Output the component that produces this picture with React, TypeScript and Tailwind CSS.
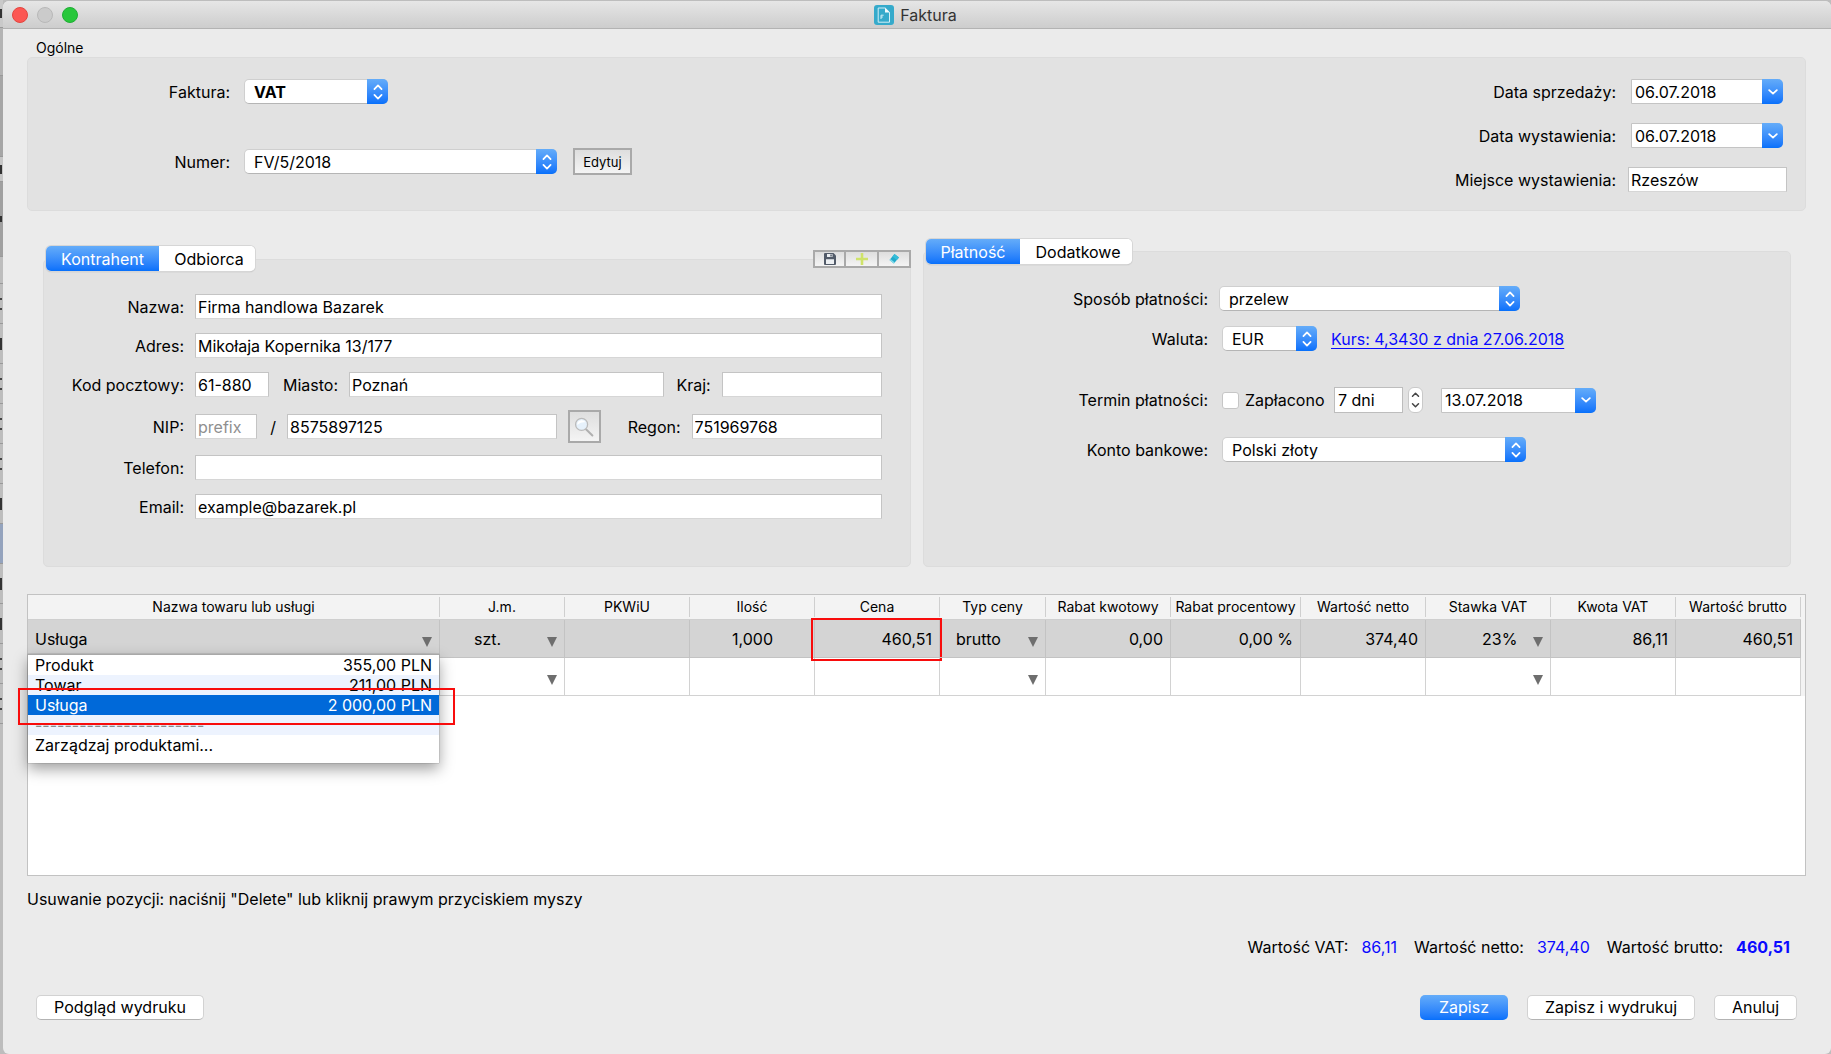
import React from "react";

const FIELD =
  "block h-[25px] min-w-0 border border-[#c4c4c4] border-b-[#d6d6d6] bg-white px-[2px] text-base leading-[22px] text-black outline-none placeholder:text-[#8f8f8f]";

function Cap({ kind }: { kind: "updown" | "down" }) {
  return (
    <span className="pointer-events-none absolute inset-y-0 right-0 flex w-[21px] items-center justify-center rounded-r-[5px] bg-gradient-to-b from-[#64acf9] to-[#0670fb]">
      {kind === "updown" ? (
        <svg width="10" height="16" viewBox="0 0 10 16" fill="none" stroke="#fff" strokeWidth="1.7" strokeLinecap="round" strokeLinejoin="round">
          <path d="M1.4 5.2 5 1.3l3.6 3.9M1.4 10.8 5 14.7l3.6-3.9" />
        </svg>
      ) : (
        <svg width="10" height="6" viewBox="0 0 10 6" fill="none" stroke="#fff" strokeWidth="1.8" strokeLinecap="round" strokeLinejoin="round">
          <path d="M1.2 1.2 5 4.6l3.8-3.4" />
        </svg>
      )}
    </span>
  );
}

function Select({ id, value, width, bold }: { id: string; value: string; width: string; bold?: boolean }) {
  return (
    <span className={`relative block h-[25px] ${width}`}>
      <select
        id={id}
        defaultValue={value}
        className={`block h-[25px] w-full appearance-none rounded-[5px] border border-[#cfcfcf] border-b-[#b5b5b5] bg-white pl-[9px] pr-6 text-base leading-[22px] text-black outline-none ${bold ? "font-bold" : ""}`}
      >
        <option>{value}</option>
      </select>
      <Cap kind="updown" />
    </span>
  );
}

function DateBox({ id, value, width, label }: { id: string; value: string; width: string; label?: string }) {
  return (
    <span className={`relative block h-[25px] ${width}`}>
      <input
        id={id}
        aria-label={label}
        defaultValue={value}
        className="block h-[25px] w-full rounded-r-[5px] border border-[#c4c4c4] bg-white pl-[3px] pr-6 text-base leading-[22px] text-black outline-none"
      />
      <Cap kind="down" />
    </span>
  );
}

function Label({ htmlFor, width, children }: { htmlFor: string; width?: string; children: React.ReactNode }) {
  return (
    <label htmlFor={htmlFor} className={`shrink-0 whitespace-nowrap text-right ${width ?? ""}`}>
      {children}
    </label>
  );
}

function Tabs({ first, second, w1, w2 }: { first: string; second: string; w1: string; w2: string }) {
  return (
    <div role="tablist" className="flex h-[25px] w-fit overflow-hidden rounded-[5px] bg-white shadow-[0_0_0_1px_#d6d6d6,0_1px_1px_#9c9c9c]">
      <button role="tab" aria-selected="true" className={`bg-gradient-to-b from-[#64acf9] to-[#0670fb] text-white ${w1}`}>
        {first}
      </button>
      <button role="tab" aria-selected="false" className={`bg-white pl-1 ${w2}`}>
        {second}
      </button>
    </div>
  );
}

function Triangle() {
  return (
    <svg width="10" height="10" viewBox="0 0 10 10" className="mt-[6px] shrink-0" aria-hidden="true">
      <path d="M0 0h10L5 10z" fill="#6e6e6e" />
    </svg>
  );
}

const COLUMNS: { title: string; width: string }[] = [
  { title: "Nazwa towaru lub usługi", width: "" },
  { title: "J.m.", width: "w-[125px]" },
  { title: "PKWiU", width: "w-[125px]" },
  { title: "Ilość", width: "w-[125px]" },
  { title: "Cena", width: "w-[125px]" },
  { title: "Typ ceny", width: "w-[106px]" },
  { title: "Rabat kwotowy", width: "w-[125px]" },
  { title: "Rabat procentowy", width: "w-[130px]" },
  { title: "Wartość netto", width: "w-[125px]" },
  { title: "Stawka VAT", width: "w-[125px]" },
  { title: "Kwota VAT", width: "w-[125px]" },
  { title: "Wartość brutto", width: "w-[125px]" },
];

const PRODUCTS = [
  { name: "Produkt", price: "355,00 PLN", style: "bg-white" },
  { name: "Towar", price: "211,00 PLN", style: "bg-[#edf3fe]" },
  { name: "Usługa", price: "2 000,00 PLN", style: "bg-[#0069d9] text-white" },
  { name: "-----------------------", price: "", style: "bg-[#edf3fe] text-[#8a8a8a]" },
  { name: "Zarządzaj produktami...", price: "", style: "bg-white" },
];

function ProductMenu() {
  return (
    <div className="absolute inset-x-0 top-[34px] z-10 border-t border-[#a8a8a8] bg-white pb-2 shadow-[0_6px_14px_rgba(0,0,0,0.38),0_0_1px_rgba(0,0,0,0.5)]">
      <ul role="listbox" aria-label="Produkty">
        {PRODUCTS.map((p) => (
          <li
            key={p.name}
            role="option"
            aria-selected={p.name === "Usługa"}
            className={`flex h-5 items-center justify-between px-[7px] leading-5 ${p.style}`}
          >
            <span>{p.name}</span>
            <span>{p.price}</span>
          </li>
        ))}
      </ul>
      <div className="pointer-events-none absolute -left-[10px] -right-[16px] top-[33px] h-[37px] border-2 border-[#f80c0c]" />
    </div>
  );
}

const CELL = "relative h-[38px] border-r border-b border-[#c3c3c3] p-0";
const EMPTY = "h-[38px] border-r border-b border-[#d2d2d2] p-0";

function Items() {
  return (
    <div className="flex-1 border border-[#c2c2c2] bg-white">
      <div className="bg-[#f3f3f3]">
        <div className="pr-1">
          <table className="w-full table-fixed border-separate border-spacing-0">
            <colgroup>
              {COLUMNS.map((c) => (
                <col key={c.title} className={c.width} />
              ))}
            </colgroup>
            <thead>
              <tr>
                {COLUMNS.map((c) => (
                  <th key={c.title} className="h-[25px] border-b border-[#cfcfcf] bg-[#f3f3f3] p-0 text-sm font-normal">
                    <div className="flex h-5 items-center justify-center whitespace-nowrap border-r border-[#cfcfcf]">{c.title}</div>
                  </th>
                ))}
              </tr>
            </thead>
            <tbody>
              <tr className="bg-[#d4d4d4]">
                <td className={CELL}>
                  <button aria-haspopup="listbox" aria-expanded="true" className="flex w-full items-center justify-between px-[7px] text-left">
                    Usługa
                    <Triangle />
                  </button>
                  <ProductMenu />
                </td>
                <td className={CELL}>
                  <button className="flex w-full items-center justify-between pl-[34px] pr-[7px]">
                    szt.
                    <Triangle />
                  </button>
                </td>
                <td className={CELL} />
                <td className={`${CELL} pr-[41px] text-right`}>1,000</td>
                <td className={`${CELL} pr-[7px] text-right`}>
                  460,51
                  <div className="pointer-events-none absolute -left-1 -right-[3px] -top-[2px] h-[43px] border-2 border-[#f80c0c]" />
                </td>
                <td className={CELL}>
                  <button className="flex w-full items-center justify-between pl-[16px] pr-[7px]">
                    brutto
                    <Triangle />
                  </button>
                </td>
                <td className={`${CELL} pr-[7px] text-right`}>0,00</td>
                <td className={`${CELL} pr-[7px] text-right`}>0,00 %</td>
                <td className={`${CELL} pr-[7px] text-right`}>374,40</td>
                <td className={CELL}>
                  <button className="flex w-full items-center justify-between pl-[56px] pr-[7px]">
                    23%
                    <Triangle />
                  </button>
                </td>
                <td className={`${CELL} pr-[7px] text-right`}>86,11</td>
                <td className={`${CELL} pr-[7px] text-right`}>460,51</td>
              </tr>
              <tr className="bg-white">
                {COLUMNS.map((c) => (
                  <td key={c.title} className={EMPTY}>
                    {["J.m.", "Typ ceny", "Stawka VAT"].includes(c.title) && (
                      <button aria-label={c.title} className="flex w-full justify-end pr-[7px]">
                        <Triangle />
                      </button>
                    )}
                  </td>
                ))}
              </tr>
            </tbody>
          </table>
        </div>
      </div>
    </div>
  );
}

const PUSH =
  "h-[25px] rounded-[5px] border border-[#d2d2d2] border-b-[#b3b3b3] bg-white leading-[23px] whitespace-nowrap";
const BEVEL = "flex items-center justify-center border-2 border-[#a9a9a9] bg-gradient-to-b from-[#dedede] to-[#f4f4f4]";

// Sliver of the window that lies behind this one: row height and tone, and the mark at its edge.
const BACKDROP = [
  { row: "h-[28px] bg-[#c9c9c9]", mark: "h-[9px]" },
  { row: "h-[48px] bg-[#b4b4b4]", mark: "" },
  { row: "h-[81px] bg-[#a6a6a6]", mark: "" },
  { row: "h-[25px] bg-[#c6c6c6]", mark: "h-[9px]" },
  { row: "h-[75px] bg-[#a0a0a0]", mark: "h-[6px]" },
  { row: "h-[27px] bg-[#bdbdbd]", mark: "" },
  { row: "h-[40px] bg-[#bdbdbd]", mark: "h-[12px] border-y-2 border-[#444] bg-transparent" },
  { row: "h-[40px] bg-[#bdbdbd]", mark: "h-[12px]" },
  { row: "h-[40px] bg-[#bdbdbd]", mark: "h-[12px] border-y-2 border-[#444] bg-transparent" },
  { row: "h-[40px] bg-[#bdbdbd]", mark: "h-[12px] border-y-2 border-[#444] bg-transparent" },
  { row: "h-[40px] bg-[#bdbdbd]", mark: "h-[12px] border-y-2 border-[#444] bg-transparent" },
  { row: "h-[40px] bg-[#bdbdbd]", mark: "h-[12px]" },
  { row: "h-[40px] bg-[#94a3bd]", mark: "" },
  { row: "h-[40px] bg-[#bdbdbd]", mark: "h-[12px]" },
  { row: "h-[40px] bg-[#bdbdbd]", mark: "h-[12px]" },
  { row: "h-[40px] bg-[#bdbdbd]", mark: "h-[12px] border-y-2 border-[#444] bg-transparent" },
  { row: "h-[40px] bg-[#bdbdbd]", mark: "h-[12px] border-y-2 border-[#444] bg-transparent" },
];

export default function App() {
  return (
    <div className="flex min-h-screen bg-[#bdbdbd] font-['Inter',sans-serif] text-base leading-5 text-black">
      <div aria-hidden="true" className="w-[3px] shrink-0 overflow-hidden">
        {BACKDROP.map((b, i) => (
          <div key={i} className={`flex items-center border-b border-[#999] ${b.row}`}>
            {b.mark && <span className={`w-[2px] ${b.mark.includes("transparent") ? "" : "bg-[#333]"} ${b.mark}`} />}
          </div>
        ))}
      </div>

      <main className="mt-px flex min-w-0 flex-1 flex-col overflow-hidden rounded-[6px] bg-[#ebebeb]">
        <header className="relative flex h-[28px] shrink-0 items-center justify-center border-b border-[#b3b3b3] bg-gradient-to-b from-[#e6e6e6] to-[#cdcdcd]">
          <div className="absolute left-[9px] top-[6px] flex gap-[9px]">
            <button aria-label="Zamknij" className="size-4 rounded-full border border-[#e2463f] bg-[#fc5753]" />
            <button aria-label="Minimalizuj" className="size-4 rounded-full border border-[#b8b8b8] bg-[#cbcbcb]" />
            <button aria-label="Powiększ" className="size-4 rounded-full border border-[#1fae35] bg-[#28c73b]" />
          </div>
          <h1 className="flex items-center gap-[6px] pr-[3px] text-[#333]">
            <svg width="20" height="20" viewBox="0 0 20 20" aria-hidden="true">
              <rect width="20" height="20" rx="3" fill="#35aacb" />
              <path d="M4.2 3h7l4.3 4.3v9.9H4.2z" fill="#35aacb" stroke="#d3eff7" strokeWidth="1" />
              <path d="M11 2.7v4.8h4.8z" fill="#f3fbfd" />
              <path d="M7 14V10.200h2.600M7 12h1.800" fill="none" stroke="#d3eff7" strokeWidth="1" />
            </svg>
            Faktura
          </h1>
        </header>

        <div className="flex flex-1 flex-col pb-[34px] pl-[24px] pr-[25px] pt-[10px]">
          <h2 className="pl-[9px] text-sm leading-[18px]">Ogólne</h2>
          <section className="flex h-[154px] shrink-0 justify-between rounded-[5px] border border-[#dcdcdc] bg-[#e2e2e2] pr-[18px] pt-[21px]">
            <div className="flex flex-col gap-[45px]">
              <div className="flex h-[25px] items-center gap-[14px]">
                <Label htmlFor="typ" width="w-[202px]">Faktura:</Label>
                <Select id="typ" value="VAT" width="w-[144px]" bold />
              </div>
              <div className="flex h-[25px] items-center gap-[14px]">
                <Label htmlFor="numer" width="w-[202px]">Numer:</Label>
                <Select id="numer" value="FV/5/2018" width="w-[313px]" />
                <button className={`${BEVEL} ml-[2px] h-[27px] w-[59px] text-[13px]`}>Edytuj</button>
              </div>
            </div>
            <div className="grid grid-cols-[auto_159px] content-start items-center gap-x-[12px] gap-y-[19px]">
              <Label htmlFor="sprzedaz">Data sprzedaży:</Label>
              <DateBox id="sprzedaz" value="06.07.2018" width="ml-[3px] w-[152px]" />
              <Label htmlFor="wystawienie">Data wystawienia:</Label>
              <DateBox id="wystawienie" value="06.07.2018" width="ml-[3px] w-[152px]" />
              <Label htmlFor="miejsce">Miejsce wystawienia:</Label>
              <input id="miejsce" defaultValue="Rzeszów" className={`${FIELD} w-full`} />
            </div>
          </section>

          <div className="flex shrink-0 gap-[12px] pl-[16px] pr-[15px] pt-[27px]">
            <section className="relative mt-[21px] h-[308px] min-w-0 flex-1 rounded-[5px] border border-[#dcdcdc] bg-[#e2e2e2]">
              <div className="absolute -top-[14px] left-[2px]">
                <Tabs first="Kontrahent" second="Odbiorca" w1="w-[113px]" w2="w-[96px]" />
              </div>
              <div className="absolute -right-px -top-[10px] flex">
                <button aria-label="Zapisz kontrahenta" className={`${BEVEL} h-[18px] w-[33px]`}>
                  <svg width="12" height="12" viewBox="0 0 12 12">
                    <path d="M0 1a1 1 0 0 1 1-1h8.5L12 2.5V11a1 1 0 0 1-1 1H1a1 1 0 0 1-1-1z" fill="#525b69" />
                    <path d="M3 1h5.5v3H3zM2 6.3h8V11H2z" fill="#eceff2" />
                    <path d="M6.3 1.4h1.5v2.2H6.3z" fill="#525b69" />
                  </svg>
                </button>
                <button aria-label="Dodaj kontrahenta" className={`${BEVEL} h-[18px] w-[33px] border-l-0`}>
                  <svg width="12" height="12" viewBox="0 0 12 12">
                    <path d="M4.700 0h2.600v4.700H12v2.600H7.300V12H4.700V7.300H0V4.700h4.700z" fill="#cfe36a" />
                  </svg>
                </button>
                <button aria-label="Wyczyść" className={`${BEVEL} h-[18px] w-[32px] border-l-0`}>
                  <svg width="12" height="12" viewBox="0 0 12 12">
                    <path d="M6.500 1 11 4.600 5.800 10.500 1.500 7z" fill="#21aacb" />
                    <path d="M6.500 1 11 4.600 8.800 7 4.400 3.400z" fill="#35bcd8" />
                    <path d="m1.500 7 4.300 3.500 1-1.100-4.400-3.500z" fill="#86dceb" />
                  </svg>
                </button>
              </div>

              <div className="flex flex-col pr-[28px] pt-[34px]">
                <div className="flex flex-col gap-[14px]">
                  <div className="flex items-center gap-[11px]">
                    <Label htmlFor="nazwa" width="w-[140px]">Nazwa:</Label>
                    <input id="nazwa" defaultValue="Firma handlowa Bazarek" className={`${FIELD} flex-1`} />
                  </div>
                  <div className="flex items-center gap-[11px]">
                    <Label htmlFor="adres" width="w-[140px]">Adres:</Label>
                    <input id="adres" defaultValue="Mikołaja Kopernika 13/177" className={`${FIELD} flex-1`} />
                  </div>
                  <div className="flex items-center gap-[11px]">
                    <Label htmlFor="kod" width="w-[140px]">Kod pocztowy:</Label>
                    <input id="kod" defaultValue="61-880" className={`${FIELD} w-[74px]`} />
                    <Label htmlFor="miasto" width="w-[58px]">Miasto:</Label>
                    <input id="miasto" defaultValue="Poznań" className={`${FIELD} flex-[2]`} />
                    <Label htmlFor="kraj" width="w-[36px]">Kraj:</Label>
                    <input id="kraj" className={`${FIELD} flex-1`} />
                  </div>
                </div>
                <div className="flex items-center gap-[11px] pt-[13px]">
                  <Label htmlFor="prefix" width="w-[140px]">NIP:</Label>
                  <input id="prefix" placeholder="prefix" className={`${FIELD} w-[62px]`} />
                  <span className="w-[8px] text-right">/</span>
                  <input id="nip" aria-label="NIP" defaultValue="8575897125" className={`${FIELD} flex-[10]`} />
                  <button aria-label="Szukaj" className={`${BEVEL} size-[33px] shrink-0`}>
                    <svg width="20" height="20" viewBox="0 0 20 20">
                      <path d="m12 12.3 6.4 6.2" stroke="#b0b0b0" strokeWidth="2" strokeLinecap="round" />
                      <circle cx="7.6" cy="7.4" r="6" fill="#e6f1fb" stroke="#bababa" strokeWidth="1.3" />
                      <path d="M3.4 6a4.6 4.6 0 0 1 8.2-.6C9 5 6 5.6 3.4 8z" fill="#fff" />
                    </svg>
                  </button>
                  <Label htmlFor="regon" width="w-[69px]">Regon:</Label>
                  <input id="regon" defaultValue="751969768" className={`${FIELD} flex-[7]`} />
                </div>
                <div className="flex flex-col gap-[14px] pt-[12px]">
                  <div className="flex items-center gap-[11px]">
                    <Label htmlFor="telefon" width="w-[140px]">Telefon:</Label>
                    <input id="telefon" className={`${FIELD} flex-1`} />
                  </div>
                  <div className="flex items-center gap-[11px]">
                    <Label htmlFor="email" width="w-[140px]">Email:</Label>
                    <input id="email" defaultValue="example@bazarek.pl" className={`${FIELD} flex-1`} />
                  </div>
                </div>
              </div>
            </section>

            <section className="relative mt-[13px] h-[316px] min-w-0 flex-1 rounded-[5px] border border-[#dcdcdc] bg-[#e2e2e2]">
              <div className="absolute -top-[13px] left-[2px]">
                <Tabs first="Płatność" second="Dodatkowe" w1="w-[94px]" w2="w-[112px]" />
              </div>
              <div className="flex flex-col pt-[34px]">
                <div className="flex items-center gap-[11px]">
                  <Label htmlFor="sposob" width="w-[284px]">Sposób płatności:</Label>
                  <Select id="sposob" value="przelew" width="w-[301px]" />
                </div>
                <div className="flex items-center gap-[14px] pt-[15px]">
                  <Label htmlFor="waluta" width="w-[284px]">Waluta:</Label>
                  <Select id="waluta" value="EUR" width="w-[95px]" />
                  <a href="#kurs" className="whitespace-nowrap text-[#0a0aff] underline underline-offset-[3px] decoration-1">
                    Kurs: 4,3430 z dnia 27.06.2018
                  </a>
                </div>
                <div className="flex items-center pt-[36px]">
                  <Label htmlFor="termin" width="w-[284px]">Termin płatności:</Label>
                  <label className="ml-[14px] flex w-[112px] items-center gap-[6px] whitespace-nowrap">
                    <input type="checkbox" className="size-[17px] shrink-0 appearance-none rounded-[3px] border border-[#c6c6c6] bg-white" />
                    Zapłacono
                  </label>
                  <input id="termin" defaultValue="7 dni" className="h-[26px] w-[69px] border border-[#bdbdbd] bg-white pl-[3px] outline-none" />
                  <button aria-label="Zmień liczbę dni" className="ml-[5px] flex h-[26px] w-[15px] items-center justify-center rounded-[6px] border border-[#c9c9c9] bg-white">
                    <svg width="9" height="16" viewBox="0 0 9 16" fill="none" stroke="#444" strokeWidth="1.5" strokeLinecap="round" strokeLinejoin="round">
                      <path d="M1.5 4.3 4.5 1.3l3 3M1.5 11.7l3 3 3-3" />
                    </svg>
                  </button>
                  <DateBox id="data-terminu" label="Data terminu" value="13.07.2018" width="ml-[18px] w-[155px]" />
                </div>
                <div className="flex items-center gap-[14px] pt-[24px]">
                  <Label htmlFor="konto" width="w-[284px]">Konto bankowe:</Label>
                  <Select id="konto" value="Polski złoty" width="w-[304px]" />
                </div>
              </div>
            </section>
          </div>

          <div className="flex flex-1 flex-col pt-[27px]">
            <Items />
          </div>

          <p className="pt-[13px]">Usuwanie pozycji: naciśnij "Delete" lub kliknij prawym przyciskiem myszy</p>

          <dl className="flex justify-end gap-[17px] pr-[16px] pt-[28px]">
            <div className="flex gap-[13px]">
              <dt>Wartość VAT:</dt>
              <dd className="text-[#0a0aff]">86,11</dd>
            </div>
            <div className="flex gap-[13px]">
              <dt>Wartość netto:</dt>
              <dd className="text-[#0a0aff]">374,40</dd>
            </div>
            <div className="flex gap-[13px]">
              <dt>Wartość brutto:</dt>
              <dd className="font-bold text-[#0a0aff]">460,51</dd>
            </div>
          </dl>

          <footer className="flex items-center justify-between pl-[9px] pr-[9px] pt-[38px]">
            <button className={`${PUSH} w-[168px]`}>Podgląd wydruku</button>
            <div className="flex gap-[19px]">
              <button className="h-[25px] w-[88px] rounded-[5px] bg-gradient-to-b from-[#64acf9] to-[#0670fb] leading-[25px] text-white">
                Zapisz
              </button>
              <button className={`${PUSH} w-[168px]`}>Zapisz i wydrukuj</button>
              <button className={`${PUSH} w-[83px]`}>Anuluj</button>
            </div>
          </footer>
        </div>
      </main>
    </div>
  );
}
